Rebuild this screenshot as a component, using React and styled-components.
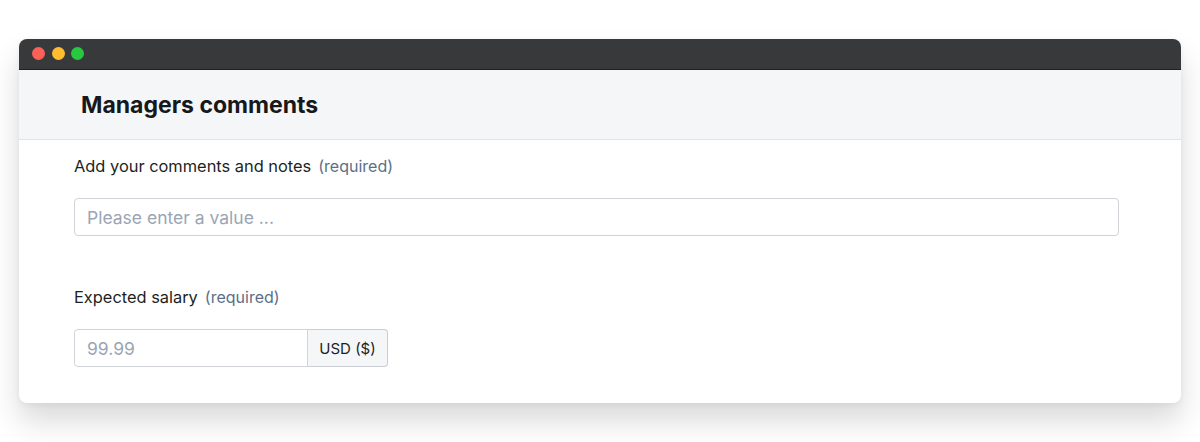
import React from "react";
import styled, { createGlobalStyle } from "styled-components";

const Global = createGlobalStyle`
  html, body { margin: 0; padding: 0; background: #ffffff; }
  body { font-family: Inter, "Noto Sans", sans-serif; }
  * { box-sizing: border-box; }
`;

const Page = styled.div`
  width: 1200px;
  height: 442px;
  padding: 39px 19px 40px 19px;
  background: #ffffff;
`;

const Window = styled.div`
  display: flex;
  flex-direction: column;
  height: 364px;
  border-radius: 8px;
  background: #ffffff;
  box-shadow: 0 18px 30px rgba(0, 0, 0, 0.15), 0 2px 6px rgba(0, 0, 0, 0.05);
  overflow: hidden;
`;

const TitleBar = styled.div`
  display: flex;
  align-items: center;
  gap: 6.5px;
  height: 31px;
  padding: 0 0 1px 13px;
  background: #38393b;
  border-bottom: 1px solid #1f2022;
`;

const Dot = styled.span`
  width: 13px;
  height: 13px;
  border-radius: 50%;
  background: ${(p) => p.$color};
`;

const Header = styled.div`
  display: flex;
  align-items: center;
  height: 70px;
  padding: 1px 0 0 62px;
  background: #f5f6f8;
  border-bottom: 1px solid #e2e4e8;
`;

const Heading = styled.h1`
  margin: 0;
  font-family: Inter, sans-serif;
  font-size: 23px;
  font-weight: 700;
  color: #16181b;
`;

const Body = styled.div`
  display: flex;
  flex-direction: column;
  padding: 16px 62px 0 55px;
`;

const Field = styled.div`
  display: flex;
  flex-direction: column;
  gap: 22px;
  margin-bottom: ${(p) => p.$mb || 0}px;
`;

const Label = styled.label`
  display: flex;
  gap: 7px;
  font-size: 16.4px;
  line-height: 20px;
  color: #1d1f22;
`;

const Required = styled.span`
  color: #5b6f88;
  font-size: 16px;
`;

const TextInput = styled.input`
  width: 100%;
  height: 38px;
  padding: 0 12px;
  border: 1px solid #d0d3d7;
  border-radius: 4px;
  font-family: Inter, sans-serif;
  font-size: 17.5px;
  color: #1d1f22;
  outline: none;
  &::placeholder { color: #9aa5b4; }
`;

const Group = styled.div`
  display: flex;
  width: 314px;
`;

const AmountInput = styled.input`
  width: 234px;
  height: 38px;
  padding: 0 12px;
  border: 1px solid #d0d3d7;
  border-radius: 4px 0 0 4px;
  font-family: Inter, sans-serif;
  font-size: 17.5px;
  outline: none;
  &::placeholder { color: #9aa5b4; }
`;

const Addon = styled.span`
  display: flex;
  align-items: center;
  justify-content: center;
  width: 80px;
  height: 38px;
  border: 1px solid #c9ccd1;
  border-left: none;
  border-radius: 0 4px 4px 0;
  background: #f5f6f8;
  font-size: 15px;
  color: #1d1f22;
`;

export default function App() {
  return (
    <>
      <Global />
      <Page>
        <Window>
          <TitleBar>
            <Dot $color="#fe5f57" />
            <Dot $color="#febc2e" />
            <Dot $color="#28c840" />
          </TitleBar>
          <Header>
            <Heading>Managers comments</Heading>
          </Header>
          <Body>
            <Field $mb={51}>
              <Label>
                Add your comments and notes <Required>(required)</Required>
              </Label>
              <TextInput placeholder="Please enter a value ..." />
            </Field>
            <Field>
              <Label>
                Expected salary <Required>(required)</Required>
              </Label>
              <Group>
                <AmountInput placeholder="99.99" />
                <Addon>USD ($)</Addon>
              </Group>
            </Field>
          </Body>
        </Window>
      </Page>
    </>
  );
}
